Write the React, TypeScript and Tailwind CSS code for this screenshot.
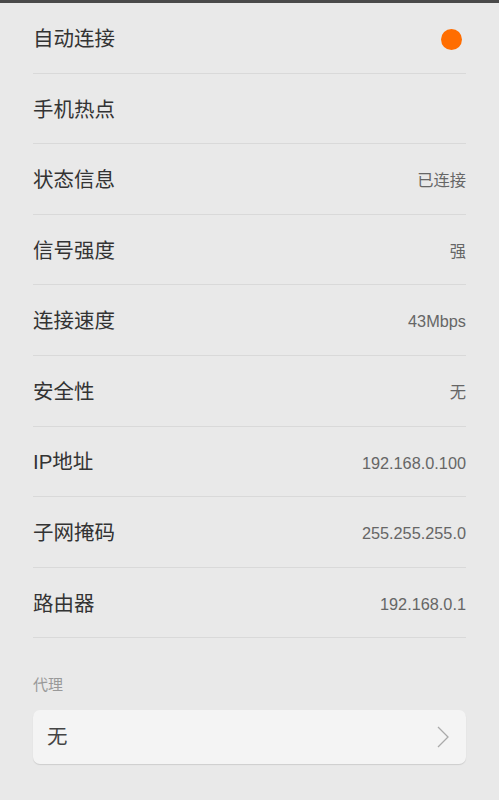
const rows: { label: string; value?: string; dot?: boolean }[] = [
    { label: '自动连接', dot: true },
    { label: '手机热点' },
    { label: '状态信息', value: '已连接' },
    { label: '信号强度', value: '强' },
    { label: '连接速度', value: '43Mbps' },
    { label: '安全性', value: '无' },
    { label: 'IP地址', value: '192.168.0.100' },
    { label: '子网掩码', value: '255.255.255.0' },
    { label: '路由器', value: '192.168.0.1' },
];

const App = () => {
    return (
        <div
            className="w-[499px] h-[800px] bg-[#e9e9e9] overflow-hidden"
            style={{ fontFamily: '"Liberation Sans", "Noto Sans CJK SC", sans-serif' }}
        >
            <div className="h-[3px] bg-[#4a4a4a]" />
            <div className="px-[33px]">
                {rows.map((r) => (
                    <div
                        key={r.label}
                        className="h-[70.6px] pt-[3px] flex items-center justify-between border-b border-[#d9d9d9]"
                    >
                        <span className="text-[20.5px] text-[#333]">{r.label}</span>
                        {r.dot && <span className="w-[21px] h-[21px] rounded-full bg-[#ff6d00] mr-[4px]" />}
                        {r.value && <span className="text-[16.3px] text-[#666]">{r.value}</span>}
                    </div>
                ))}
                <div className="pt-[37px] pb-[15px] text-[15px] text-[#999] leading-[20px]">代理</div>
                <div className="h-[54px] rounded-[7px] bg-[#f4f4f4] shadow-[0_1px_1px_rgba(0,0,0,0.12)] flex items-center justify-between pl-[14px] pr-[17px]">
                    <span className="text-[20.5px] text-[#444]">无</span>
                    <svg width="12" height="22" viewBox="0 0 12 22" fill="none" stroke="#aaa" strokeWidth="1.3">
                        <polyline points="1,1 11,11 1,21" />
                    </svg>
                </div>
            </div>
        </div>
    );
};

export default App;
